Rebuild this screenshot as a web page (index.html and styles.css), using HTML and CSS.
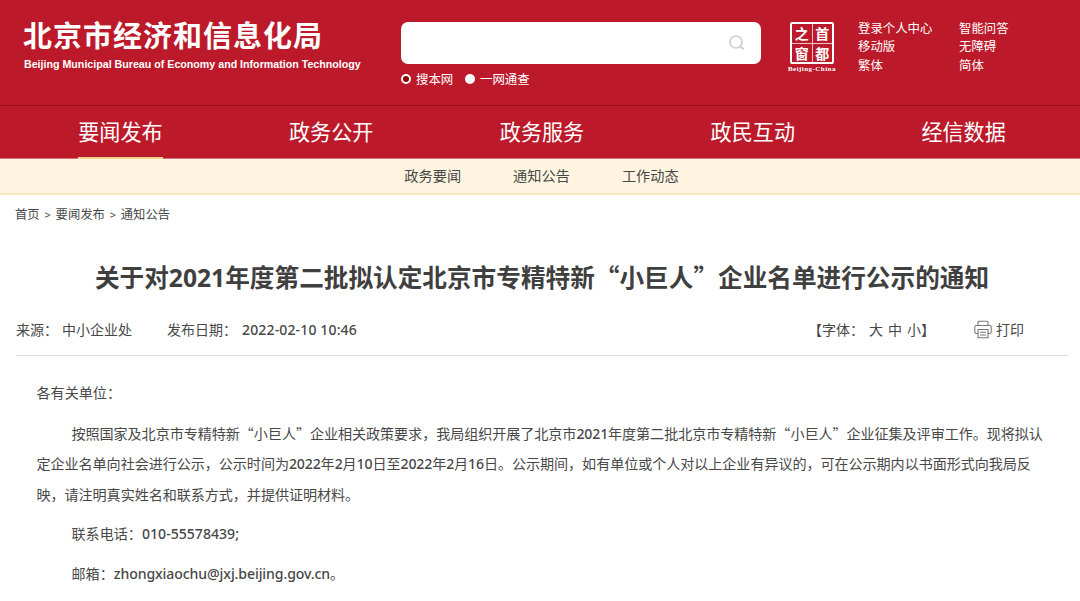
FILE: index.html
```html
<!DOCTYPE html>
<html lang="zh-CN">
<head>
<meta charset="utf-8">
<title>北京市经济和信息化局</title>
<link rel="stylesheet" href="styles.css">
</head>
<body>
<header class="header">
  <div class="brand">
    <div class="brand-cn">北京市经济和信息化局</div>
    <div class="brand-en">Beijing Municipal Bureau of Economy and Information Technology</div>
  </div>
  <div class="search">
    <div class="search-box">
      <svg class="search-icon" viewBox="0 0 16 16" width="16" height="16" fill="none" stroke="#cfcfcf"><circle cx="7" cy="7" r="6" stroke-width="1.7"/><path d="M11 11.2L14.6 14.2" stroke-width="2.1"/></svg>
    </div>
    <div class="scopes">
      <span class="radio radio-on"></span><span class="scope-a">搜本网</span>
      <span class="radio"></span><span class="scope-b">一网通查</span>
    </div>
  </div>
  <div class="seal">
    <div class="seal-grid"><span>之</span><span>首</span><span>窗</span><span>都</span></div>
    <div class="seal-en">Beijing-China</div>
  </div>
  <div class="links links-a"><a>登录个人中心</a><a>移动版</a><a>繁体</a></div>
  <div class="links"><a>智能问答</a><a>无障碍</a><a>简体</a></div>
</header>
<nav class="nav">
  <div class="nav-cell"><a class="nav-link active">要闻发布</a></div>
  <div class="nav-cell"><a class="nav-link">政务公开</a></div>
  <div class="nav-cell"><a class="nav-link">政务服务</a></div>
  <div class="nav-cell"><a class="nav-link">政民互动</a></div>
  <div class="nav-cell"><a class="nav-link">经信数据</a></div>
</nav>
<div class="subnav"><a>政务要闻</a><a>通知公告</a><a>工作动态</a></div>
<div class="crumbs"><a>首页</a><i>&gt;</i><a>要闻发布</a><i>&gt;</i><a>通知公告</a></div>
<main class="main">
  <h1 class="title">关于对2021年度第二批拟认定北京市专精特新<q>“</q>小巨人<q>”</q>企业名单进行公示的通知</h1>
  <div class="meta">
    <span class="source">来源：</span><span class="dept">中小企业处</span>
    <span class="date-label">发布日期：</span><span class="date">2022-02-10 10:46</span>
    <span class="sizes"><b class="bracket bracket-open">【</b>字体：<a class="big">大</a><a>中</a><a>小</a><b class="bracket bracket-close">】</b></span>
    <svg class="printer" viewBox="0 0 18 19" width="18" height="19" fill="none" stroke="#777" stroke-width="1.1"><path d="M4 5.5V2.2Q4 1.2 5 1.2h8q1 0 1 1v3.3M3.8 13.5H2.2Q.8 13.5.8 12V7Q.8 5.5 2.2 5.5h13.6q1.4 0 1.4 1.5v5q0 1.5-1.4 1.5h-1.6M4 9.5h10v8.3H4zM6 12.3h6M6 15h6"/></svg>
    <span class="print">打印</span>
  </div>
  <article class="article">
    <p>各有关单位：</p>
    <p><span class="line indent tight">按照国家及北京市专精特新<q>“</q>小巨人<q>”</q>企业相关政策要求，我局组织开展了北京市<span class="num">2021</span>年度第二批北京市专精特新<q>“</q>小巨人<q>”</q>企业征集及评审工作。现将拟认</span><span class="line tight">定企业名单向社会进行公示，公示时间为<span class="num">2022</span>年<span class="num">2</span>月<span class="num">10</span>日至<span class="num">2022</span>年<span class="num">2</span>月<span class="num">16</span>日。公示期间，如有单位或个人对以上企业有异议的，可在公示期内以书面形式向我局反</span><span class="line tight">映，请注明真实姓名和联系方式，并提供证明材料。</span></p>
    <p><span class="line indent">联系电话：<span class="num">010-55578439;</span></span></p>
    <p><span class="line indent">邮箱：<span class="num mail">zhongxiaochu@jxj.beijing.gov.cn</span>。</span></p>
  </article>
</main>
</body>
</html>
```

FILE: styles.css
```css
* { box-sizing: border-box; }
body {
  margin: 0;
  width: 1080px;
  height: 601px;
  overflow: hidden;
  background: #fff;
  color: #484848;
  font-family: "Noto Sans", "Noto Sans CJK SC", sans-serif;
  white-space: nowrap;
}
q { quotes: none; font-family: "Noto Sans CJK SC", sans-serif; }
q::before, q::after { content: none; }
.header {
  display: flex;
  height: 105px;
  background: #bc1a2b;
  color: #fff;
}
.brand { width: 401px; padding: 15px 0 0 23px; }
.brand-cn { font: bold 29px/39px "Noto Sans CJK SC", sans-serif; letter-spacing: 1px; }
.brand-en { font: bold 10.67px/15px "Liberation Sans", sans-serif; margin: 3px 0 0 1px; }
.search { width: 360px; padding-top: 22px; }
.search-box {
  display: flex;
  align-items: center;
  justify-content: flex-end;
  height: 42px;
  padding-right: 16px;
  border-radius: 7px;
  background: #fff;
}
.scopes { display: flex; align-items: center; height: 18px; margin-top: 6px; font-size: 12.4px; }
.radio { width: 10px; height: 10px; border-radius: 50%; background: #fff; }
.radio-on { background: #8b0000; border: 2px solid #fff; }
.scope-a { width: 49px; margin-left: 5px; }
.scope-b { margin-left: 5px; }
.seal { width: 48px; margin: 22px 22px 0 27px; }
.seal-grid {
  display: grid;
  grid-template-columns: 1fr 1fr;
  grid-template-rows: 1fr 1fr;
  gap: 1px;
  width: 44px;
  height: 42px;
  margin-left: 2px;
  border: 2px solid #fff;
  border-radius: 2px;
  background: #f0c3c8;
}
.seal-grid span {
  background: #bc1a2b;
  font: bold 14px/18px "Noto Sans CJK SC", sans-serif;
  text-align: center;
}
.seal-en { font: bold 7px/10px "Liberation Serif", serif; letter-spacing: 0.45px; }
.links { display: flex; flex-direction: column; padding-top: 20px; font-size: 12.4px; line-height: 18.3px; }
.links-a { width: 101px; }
.nav {
  display: flex;
  height: 54px;
  padding: 0 11px 0 15px;
  border-top: 1px solid #96101e;
  border-bottom: 1px solid #d4737a;
  background: #bc1a2b;
  color: #fff;
}
.nav-cell { flex: 1; display: flex; justify-content: center; }
.nav-link { height: 53px; font-size: 21.1px; line-height: 52px; }
.active { border-bottom: 2px solid #ffd691; }
.subnav {
  display: flex;
  justify-content: center;
  gap: 52px;
  height: 36px;
  padding-left: 3px;
  border-bottom: 2px solid #fde4bd;
  background: #fff4df;
  font-size: 14.2px;
  line-height: 34px;
}
.crumbs { display: flex; height: 40px; padding-left: 15px; font-size: 12.3px; line-height: 39px; }
.crumbs i { width: 16px; text-align: center; font-style: normal; font-size: 11px; }
.main { padding: 0 12px 0 16px; }
.title { margin: 21px 0 0; font-size: 24.65px; line-height: 40px; text-align: center; color: #3f3f3f; }
.meta {
  display: flex;
  align-items: center;
  height: 58px;
  padding-top: 5px;
  border-bottom: 1px solid #dedede;
  font-size: 14px;
}
.source { width: 46px; }
.dept { width: 105px; }
.date-label { width: 75px; }
.date { width: 566px; letter-spacing: 0.15px; font-weight: 500; }
.sizes { display: flex; width: 166px; }
.sizes a { margin-right: 5px; }
.sizes .big { margin-left: 5px; }
.bracket { font-weight: 400; }
.bracket-close { margin-left: -5px; }
.print { margin-left: 4px; }
.article { padding: 22px 0 0 20.5px; font-size: 14.1px; line-height: 30.6px; }
.article p { margin: 0 0 9px; }
.line { display: block; }
.tight { letter-spacing: -0.07px; }
.num { font-weight: 500; }
.tight .num { letter-spacing: -0.15px; }
.mail { letter-spacing: -0.1px; }
.indent { padding-left: 35px; }
```
